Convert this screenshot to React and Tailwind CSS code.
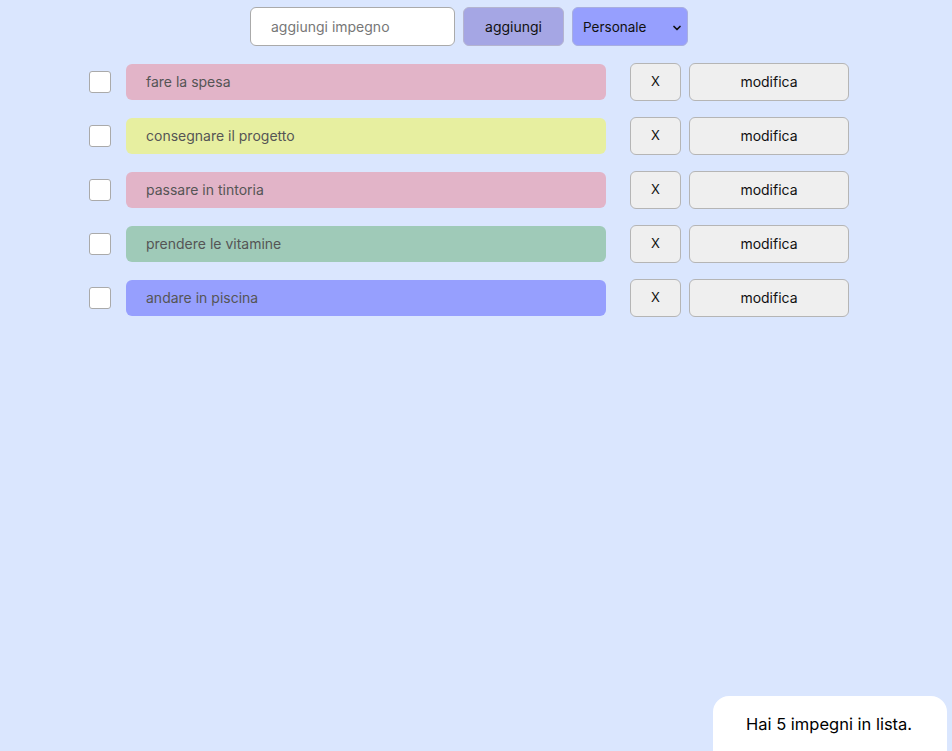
import React, { useState } from 'react';
import { ChevronDown } from 'lucide-react';

const impegni = [
    { testo: 'fare la spesa', colore: 'bg-[#e2b4c8]' },
    { testo: 'consegnare il progetto', colore: 'bg-[#e7efa0]' },
    { testo: 'passare in tintoria', colore: 'bg-[#e2b4c8]' },
    { testo: 'prendere le vitamine', colore: 'bg-[#9fcab8]' },
    { testo: 'andare in piscina', colore: 'bg-[#969ffe]' },
];

const App = () => {
    const [lista] = useState(impegni);

    return (
        <div className="min-h-screen bg-[#dae6fe] pt-[7px] pr-[14px] font-['Inter',sans-serif] text-[#111]">
            {/* Form */}
            <div className="flex justify-center gap-2">
                <input
                    type="text"
                    placeholder="aggiungi impegno"
                    className="w-[205px] h-[39px] bg-white border border-[#aaa] rounded-md pl-[20px] text-sm placeholder:text-[#777] outline-none"
                />
                <button className="w-[101px] h-[39px] bg-[#a5a6e4] border border-[#b4b4d0] rounded-md text-sm">
                    aggiungi
                </button>
                <div className="relative w-[116px] h-[39px]">
                    <select className="appearance-none w-full h-full bg-[#969ffe] border border-[#a8aee0] rounded-md pl-[10px] pt-[2px] text-[13.5px] outline-none">
                        <option>Personale</option>
                        <option>Lavoro</option>
                    </select>
                    <ChevronDown size={12} strokeWidth={3.5} className="absolute right-[5px] top-[15px] pointer-events-none" />
                </div>
            </div>

            {/* Lista */}
            <div className="mt-[17px] flex flex-col items-center gap-4">
                {lista.map((item) => (
                    <div key={item.testo} className="flex items-center">
                        <div className="w-[22px] h-[22px] bg-white border border-[#aaa] rounded-[3px]" />
                        <div className={`ml-[15px] w-[480px] h-[36px] ${item.colore} rounded-md pl-[20px] flex items-center text-sm text-[#555]`}>
                            {item.testo}
                        </div>
                        <button className="ml-6 w-[51px] h-[38px] bg-[#efefef] border border-[#b5b5b5] rounded-md text-[13px]">
                            X
                        </button>
                        <button className="ml-2 w-[160px] h-[38px] bg-[#efefef] border border-[#b5b5b5] rounded-md text-sm">
                            modifica
                        </button>
                    </div>
                ))}
            </div>

            {/* Contatore */}
            <div className="fixed right-[5px] bottom-[-20px] w-[234px] h-[75px] bg-white rounded-2xl pl-[33px] pt-[16px] text-[16.5px] text-black">
                Hai {lista.length} impegni in lista.
            </div>
        </div>
    );
};

export default App;
